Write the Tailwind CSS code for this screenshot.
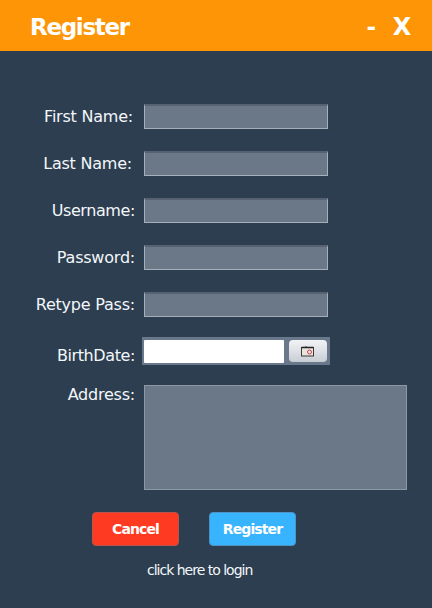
<!DOCTYPE html>
<html>
<head>
<meta charset="utf-8">
<script src="https://cdn.jsdelivr.net/npm/@tailwindcss/browser@4"></script>
</head>
<body class="m-0">
<div class="w-[432px] h-[608px] bg-[#2c3e50] overflow-hidden flex flex-col text-white font-['DejaVu_Sans',sans-serif]">
  <header class="h-[51px] shrink-0 bg-[#fd9506] flex items-center pl-[30px] pr-[22px] pt-[3px] font-bold text-[23px] tracking-[-1.3px]">
    <span class="flex-1">Register</span>
    <span class="mr-[18px]">-</span>
    <span class="text-[24px]">X</span>
  </header>
  <main class="flex flex-col pt-[53px] text-[16px] tracking-[-0.22px] text-[#f4f7fa]">
    <div class="flex flex-col gap-[22px]">
      <div class="flex items-center h-[25px]"><label class="w-[133px] text-right pt-[1px]">First Name:</label><div class="ml-[11px] w-[184px] h-[25px] bg-[#6b7888] border border-[#a6b0ba] border-t-[#566272] border-t-2"></div></div>
      <div class="flex items-center h-[25px]"><label class="w-[132px] text-right pt-[1px]">Last Name:</label><div class="ml-[12px] w-[184px] h-[25px] bg-[#6b7888] border border-[#a6b0ba] border-t-[#566272] border-t-2"></div></div>
      <div class="flex items-center h-[25px]"><label class="w-[135px] text-right pt-[1px] tracking-[-0.4px]">Username:</label><div class="ml-[9px] w-[184px] h-[25px] bg-[#6b7888] border border-[#a6b0ba] border-t-[#566272] border-t-2"></div></div>
      <div class="flex items-center h-[25px]"><label class="w-[135px] text-right pt-[1px]">Password:</label><div class="ml-[9px] w-[184px] h-[25px] bg-[#6b7888] border border-[#a6b0ba] border-t-[#566272] border-t-2"></div></div>
      <div class="flex items-center h-[25px]"><label class="w-[135px] text-right pt-[1px]">Retype Pass:</label><div class="ml-[9px] w-[184px] h-[25px] bg-[#6b7888] border border-[#a6b0ba] border-t-[#566272] border-t-2"></div></div>
    </div>
    <div class="flex items-center h-[28px] mt-[20px]">
      <label class="w-[135px] text-right pt-[9px] tracking-[-0.4px]">BirthDate:</label>
      <div class="ml-[7px] w-[188px] h-[28px] bg-[#69788a] flex items-center pl-[2px] pr-[2px] gap-[5px]">
        <div class="w-[140px] h-[23px] bg-white rounded-[1px]"></div>
        <div class="w-[38px] h-[22px] rounded-[4px] bg-gradient-to-b from-[#f2f3f5] to-[#c9ced5] flex items-center justify-center">
          <svg width="14" height="11" viewBox="0 0 14 11"><rect x="0.5" y="1.5" width="12" height="8.5" fill="#e9e4dc" stroke="#3a3a3a"/><line x1="0.5" y1="1.5" x2="12.5" y2="1.5" stroke="#222" stroke-width="1.5"/><line x1="5" y1="0" x2="5" y2="2" stroke="#333"/><circle cx="8.5" cy="6" r="2" fill="none" stroke="#d0405a"/></svg>
        </div>
      </div>
    </div>
    <div class="flex items-start mt-[20px]">
      <label class="w-[135px] text-right leading-[20px]">Address:</label>
      <div class="ml-[9px] w-[263px] h-[105px] bg-[#6b7888] border border-[#8d98a5]"></div>
    </div>
    <div class="flex mt-[22px] pl-[92px] gap-[30px] font-bold text-[14px] tracking-[-0.9px]">
      <button class="w-[87px] h-[34px] rounded-[4px] bg-[#fe3a22] border border-[#b8554b] text-white pt-[1px]">Cancel</button>
      <button class="w-[87px] h-[34px] rounded-[4px] bg-[#38b4fe] border border-[#4d93c4] text-white pt-[1px]">Register</button>
    </div>
    <p class="mt-[14px] pl-[147px] text-[14px] tracking-[-1px] leading-[20px]">click here to login</p>
  </main>
</div>
</body>
</html>
